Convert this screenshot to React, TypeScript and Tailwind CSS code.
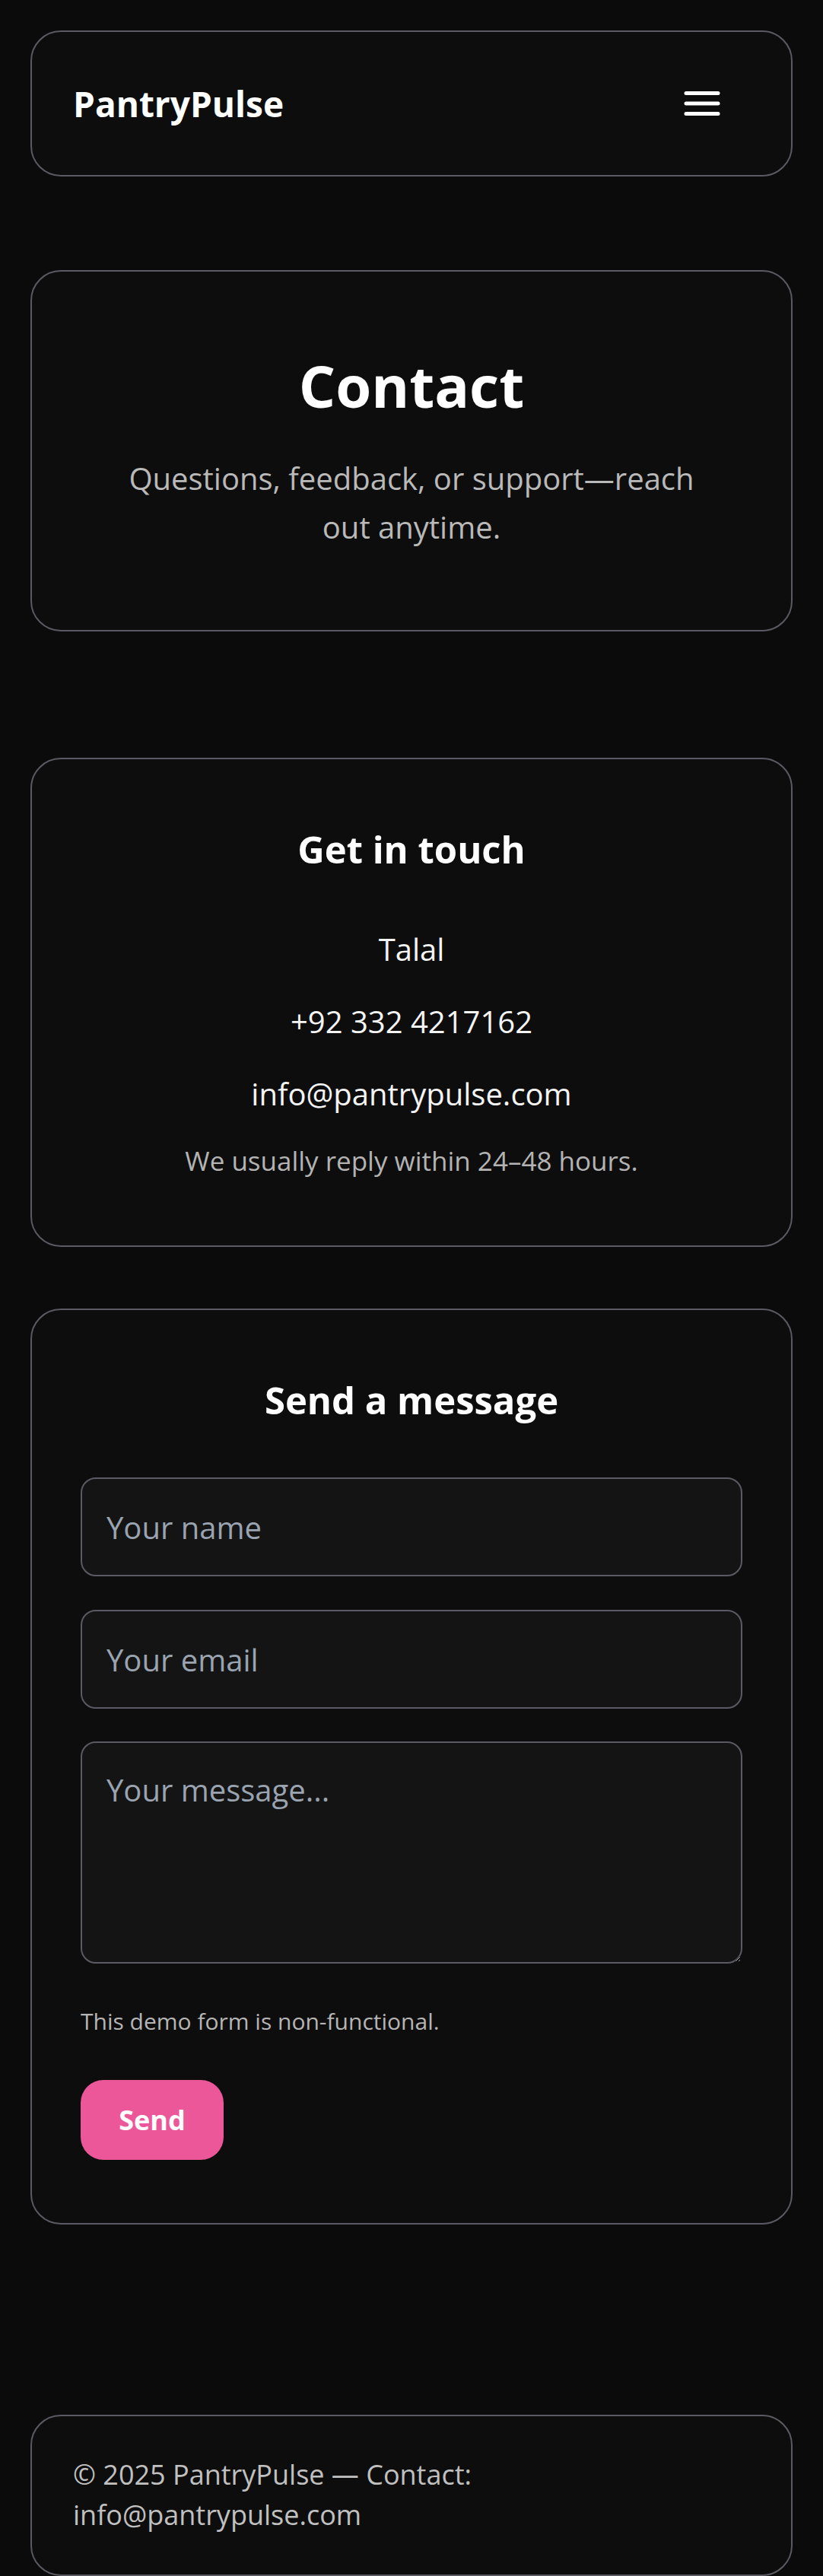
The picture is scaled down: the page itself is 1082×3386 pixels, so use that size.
import React from "react";

export default function App() {
  return (
    <div className="min-h-screen bg-[#0b0b0b] px-[40px] pt-[40px] font-['Open_Sans',sans-serif] text-white">
      {/* Header */}
      <header className="h-[192px] rounded-[40px] border-2 border-[#5b5a62] bg-[#0d0d0d] px-[54px] flex items-center justify-between">
        <div className="text-[46px] font-bold leading-none">PantryPulse</div>
        <button aria-label="Menu" className="mr-[39px] flex items-center">
          <svg width="48" height="34" viewBox="0 0 48 34" fill="none">
            <line x1="3" y1="3.5" x2="45" y2="3.5" stroke="white" strokeWidth="5" strokeLinecap="round" />
            <line x1="3" y1="17" x2="45" y2="17" stroke="white" strokeWidth="5" strokeLinecap="round" />
            <line x1="3" y1="30.5" x2="45" y2="30.5" stroke="white" strokeWidth="5" strokeLinecap="round" />
          </svg>
        </button>
      </header>

      <main>
        {/* Hero */}
        <section className="mt-[123px] rounded-[40px] border-2 border-[#5b5a62] bg-[#0d0d0d] px-[64px] pt-[102px] pb-[103px] text-center">
          <h1 className="text-[76px] font-bold leading-[96px]">Contact</h1>
          <p className="mx-auto mt-[42px] max-w-[790px] text-[40px] leading-[64px] text-[#b9b9b9]">
            Questions, feedback, or support—reach out anytime.
          </p>
        </section>

        {/* Get in touch */}
        <section className="mt-[166px] rounded-[40px] border-2 border-[#5b5a62] bg-[#0d0d0d] px-[64px] pt-[88px] pb-[83px] text-center">
          <h2 className="text-[49px] font-bold leading-[60px]">Get in touch</h2>
          <div className="mt-[70px] flex flex-col gap-[31px] text-[40px] leading-[64px] text-[#f4f4f4]">
            <div>Talal</div>
            <div>+92 332 4217162</div>
            <div>info@pantrypulse.com</div>
          </div>
          <p className="mt-[28px] text-[35px] leading-[56px] text-[#b3b3b3]">We usually reply within 24–48 hours.</p>
        </section>

        {/* Send a message */}
        <section className="mt-[81px] rounded-[40px] border-2 border-[#5b5a62] bg-[#0d0d0d] px-[64px] pt-[88px] pb-[83px]">
          <h2 className="text-center text-[49px] font-bold leading-[60px]">Send a message</h2>
          <form className="mt-[72px] flex flex-col" onSubmit={(e) => e.preventDefault()}>
            <input
              type="text"
              placeholder="Your name"
              className="h-[130px] w-full rounded-[20px] border-2 border-[#5b5a62] bg-[#141414] px-[32px] text-[40px] text-white outline-none placeholder:text-[#9aa3b0]"
            />
            <input
              type="email"
              placeholder="Your email"
              className="mt-[44px] h-[130px] w-full rounded-[20px] border-2 border-[#5b5a62] bg-[#141414] px-[32px] text-[40px] text-white outline-none placeholder:text-[#9aa3b0]"
            />
            <textarea
              placeholder="Your message..."
              className="mt-[43px] h-[292px] w-full rounded-[20px] border-2 border-[#5b5a62] bg-[#141414] px-[32px] py-[32px] text-[40px] leading-[60px] text-white outline-none placeholder:text-[#9aa3b0]"
            />
            <p className="mt-[50px] text-[30px] leading-[51px] text-[#b5b5b5]">This demo form is non-functional.</p>
            <div className="mt-[52px]">
              <button
                type="submit"
                className="flex h-[105px] w-[188px] items-center justify-center rounded-[30px] bg-[#ec5799] text-[36px] font-bold text-white"
              >
                Send
              </button>
            </div>
          </form>
        </section>
      </main>

      {/* Footer */}
      <footer className="mt-[250px] rounded-[40px] border-2 border-[#5b5a62] bg-[#0d0d0d] px-[54px] pt-[50px] pb-[52px]">
        <p className="max-w-[800px] text-[36px] leading-[53px] text-[#c0c0c0]">
          © 2025 PantryPulse — Contact: info@pantrypulse.com
        </p>
      </footer>
    </div>
  );
}
